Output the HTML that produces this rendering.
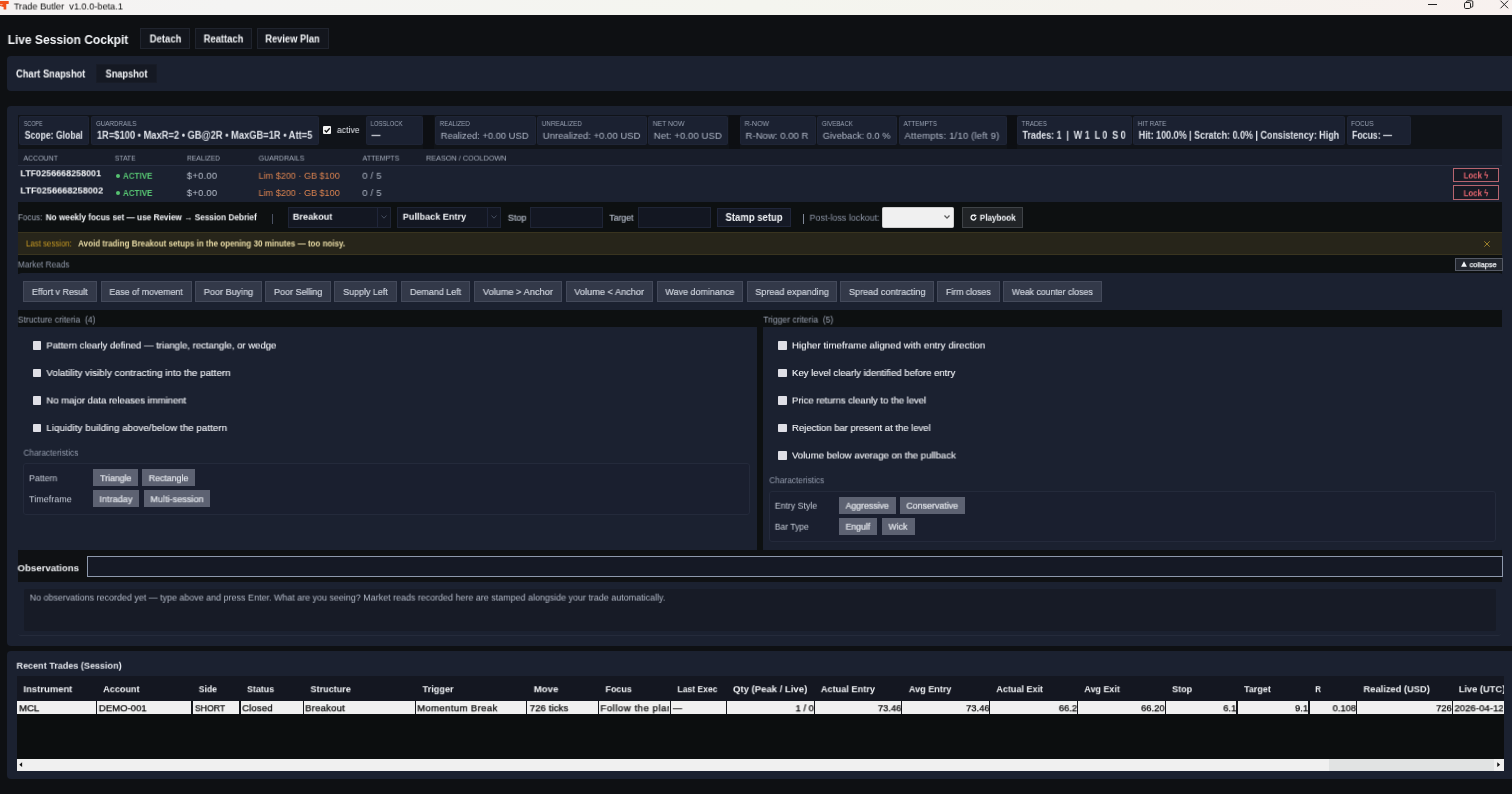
<!DOCTYPE html>
<html lang="en"><head><meta charset="utf-8"><title>Trade Butler v1.0.0-beta.1</title>
<style>
html,body{margin:0;padding:0;overflow:hidden;}
body{width:1512px;height:794px;overflow:hidden;background:#0e1013;position:relative;font-family:"Liberation Sans",sans-serif;}
.b{position:absolute;box-sizing:border-box;}
.t{position:absolute;white-space:pre;transform-origin:0 50%;will-change:transform;}
svg{position:absolute;overflow:visible;}
</style></head>
<body>
<div class="b" style="left:0px;top:0px;width:1512px;height:14.75px;background:linear-gradient(90deg,#f5f2f2 0%,#f4f4f3 15%,#f4f5ef 50%,#f5f3ee 75%,#f8f1ef 100%);"></div>
<svg style="left:0;top:1.4px" width="9" height="8.5" viewBox="0 0 9 8.5"><path d="M0 0h8.7v3.1H6.3v5.3H3.6V6.1L0 4.9z" fill="#f0501a"/><path d="M3.4 3.3 1.2 4.6 0 3.6V3.1z" fill="#f9b9a0"/></svg>
<span class="t" style="left:13px;top:0px;font-size:9.8px;line-height:11px;color:#0a0a0a;transform:translate(0.8px,0.45px) scaleX(0.9393);">Trade Butler  v1.0.0-beta.1</span>
<svg style="left:1428px;top:0.4px" width="82" height="10" viewBox="0 0 82 10" fill="none" stroke="#222" stroke-width="1"><path d="M0 4.5h9"/><rect x="36.5" y="2.5" width="6" height="6" rx="1.2"/><path d="M38.5 2.5V1.8a1 1 0 0 1 1-1h4.3a1 1 0 0 1 1 1v4.3a1 1 0 0 1-1 1H42.6"/><path d="M72.5 0.7l7.6 7.6M80.1 0.7l-7.6 7.6"/></svg>
<span class="t" style="left:7px;top:33px;font-size:12.2px;line-height:14px;color:#f2f4f7;font-weight:700;transform:translate(0.7px,0.0px) scaleX(0.9826);">Live Session Cockpit</span>
<div class="b" style="left:140.2px;top:28.2px;width:50.3px;height:20.6px;background:#13161d;border:1px solid #20242e;"></div>
<span class="t" style="left:149px;top:33px;font-size:10.0px;line-height:11px;color:#f2f4f7;font-weight:700;transform:translate(0.7px,0.45px) scaleX(0.9508);">Detach</span>
<div class="b" style="left:195px;top:28.2px;width:56.5px;height:20.6px;background:#13161d;border:1px solid #20242e;"></div>
<span class="t" style="left:203px;top:33px;font-size:10.0px;line-height:11px;color:#f2f4f7;font-weight:700;transform:translate(0.7px,0.45px) scaleX(0.9376);">Reattach</span>
<div class="b" style="left:257px;top:28.2px;width:71.5px;height:20.6px;background:#13161d;border:1px solid #20242e;"></div>
<span class="t" style="left:265px;top:33px;font-size:10.0px;line-height:11px;color:#f2f4f7;font-weight:700;transform:translate(0.3px,0.45px) scaleX(0.9305);">Review Plan</span>
<div class="b" style="left:7px;top:55.6px;width:1505px;height:35.5px;background:#1b2130;border-radius:4px 0 0 4px;"></div>
<span class="t" style="left:16px;top:68px;font-size:10.0px;line-height:11px;color:#f2f4f7;font-weight:700;transform:translate(0.0px,0.45px) scaleX(0.9319);">Chart Snapshot</span>
<div class="b" style="left:96px;top:64px;width:61px;height:18.8px;background:#151923;border:1px solid #181c27;"></div>
<span class="t" style="left:105px;top:68px;font-size:10.0px;line-height:11px;color:#f2f4f7;font-weight:700;transform:translate(0.6px,0.45px) scaleX(0.9194);">Snapshot</span>
<div class="b" style="left:7px;top:105.5px;width:1505px;height:540.7px;background:#1b2130;border-radius:4px 0 0 4px;"></div>
<div class="b" style="left:18px;top:115.4px;width:1484px;height:34px;background:#101318;"></div>
<div class="b" style="left:423.4px;top:115.4px;width:11px;height:34px;background:#0d0f13;"></div>
<div class="b" style="left:728.6px;top:115.4px;width:11.4px;height:34px;background:#0d0f13;"></div>
<div class="b" style="left:1006.6px;top:115.4px;width:10.3px;height:34px;background:#0d0f13;"></div>
<div class="b" style="left:319.5px;top:115.4px;width:46.5px;height:34px;background:#101319;"></div>
<div class="b" style="left:19.2px;top:116.3px;width:70.1px;height:28.8px;background:#1b2131;border:1px solid #1f2536;border-radius:1.5px;"></div>
<span class="t" style="left:23px;top:119px;font-size:7.4px;line-height:9px;color:#99a2b3;transform:translate(0.8px,0.0px) scaleX(0.7246);">SCOPE</span>
<span class="t" style="left:24px;top:129px;font-size:10.1px;line-height:11px;color:#dfe3ea;font-weight:700;transform:translate(0.7px,0.8px) scaleX(0.8566);">Scope: Global</span>
<div class="b" style="left:91.4px;top:116.3px;width:227.99999999999997px;height:28.8px;background:#1b2131;border:1px solid #1f2536;border-radius:1.5px;"></div>
<span class="t" style="left:96px;top:119px;font-size:7.4px;line-height:9px;color:#99a2b3;transform:scaleX(0.8437);">GUARDRAILS</span>
<span class="t" style="left:96px;top:129px;font-size:10.1px;line-height:11px;color:#dfe3ea;font-weight:700;transform:translate(0.9px,0.8px) scaleX(0.925);">1R=$100 • MaxR=2 • GB@2R • MaxGB=1R • Att=5</span>
<div class="b" style="left:323px;top:126px;width:8.3px;height:8.3px;background:#f4f4f4;border-radius:1px;"></div>
<svg style="left:323px;top:126px" width="8.3" height="8.3" viewBox="0 0 8 8"><path d="M1.6 4.1l1.7 1.7 3.2-3.6" fill="none" stroke="#111" stroke-width="1.3"/></svg>
<span class="t" style="left:336px;top:123px;font-size:9.4px;line-height:11px;color:#e3e6ec;transform:translate(0.9px,0.95px) scaleX(0.9268);">active</span>
<div class="b" style="left:366px;top:116.3px;width:57.30000000000001px;height:28.8px;background:#1b2131;border:1px solid #1f2536;border-radius:1.5px;"></div>
<span class="t" style="left:370px;top:119px;font-size:7.4px;line-height:9px;color:#99a2b3;transform:translate(0.6px,0.0px) scaleX(0.8017);">LOSSLOCK</span>
<span class="t" style="left:371px;top:129px;font-size:10.1px;line-height:11px;color:#dfe3ea;font-weight:700;transform:translate(0.5px,0.8px) scaleX(0.885);">—</span>
<div class="b" style="left:435.2px;top:116.3px;width:100.80000000000001px;height:28.8px;background:#1b2131;border:1px solid #1f2536;border-radius:1.5px;"></div>
<span class="t" style="left:439px;top:119px;font-size:7.4px;line-height:9px;color:#99a2b3;transform:translate(0.8px,0.0px) scaleX(0.8323);">REALIZED</span>
<span class="t" style="left:440px;top:129px;font-size:9.6px;line-height:11px;color:#b1b9c8;transform:translate(0.7px,0.8px) scaleX(0.9774);">Realized: +0.00 USD</span>
<div class="b" style="left:537.2px;top:116.3px;width:109.79999999999995px;height:28.8px;background:#1b2131;border:1px solid #1f2536;border-radius:1.5px;"></div>
<span class="t" style="left:541px;top:119px;font-size:7.4px;line-height:9px;color:#99a2b3;transform:translate(0.8px,0.0px) scaleX(0.8563);">UNREALIZED</span>
<span class="t" style="left:542px;top:129px;font-size:9.6px;line-height:11px;color:#b1b9c8;transform:translate(0.7px,0.8px) scaleX(0.9933);">Unrealized: +0.00 USD</span>
<div class="b" style="left:648.2px;top:116.3px;width:79.79999999999995px;height:28.8px;background:#1b2131;border:1px solid #1f2536;border-radius:1.5px;"></div>
<span class="t" style="left:652px;top:119px;font-size:7.4px;line-height:9px;color:#99a2b3;transform:translate(0.8px,0.0px) scaleX(0.9106);">NET NOW</span>
<span class="t" style="left:653px;top:129px;font-size:9.6px;line-height:11px;color:#b1b9c8;transform:translate(0.7px,0.8px) scaleX(0.999);letter-spacing:0.059px;">Net: +0.00 USD</span>
<div class="b" style="left:740px;top:116.3px;width:76px;height:28.8px;background:#1b2131;border:1px solid #1f2536;border-radius:1.5px;"></div>
<span class="t" style="left:744px;top:119px;font-size:7.4px;line-height:9px;color:#99a2b3;transform:translate(0.6px,0.0px) scaleX(0.9427);">R-NOW</span>
<span class="t" style="left:745px;top:129px;font-size:9.6px;line-height:11px;color:#b1b9c8;transform:translate(0.5px,0.8px) scaleX(0.999);letter-spacing:0.01px;">R-Now: 0.00 R</span>
<div class="b" style="left:817.2px;top:116.3px;width:80.29999999999995px;height:28.8px;background:#1b2131;border:1px solid #1f2536;border-radius:1.5px;"></div>
<span class="t" style="left:821px;top:119px;font-size:7.4px;line-height:9px;color:#99a2b3;transform:translate(0.8px,0.0px) scaleX(0.8241);">GIVEBACK</span>
<span class="t" style="left:822px;top:129px;font-size:9.6px;line-height:11px;color:#b1b9c8;transform:translate(0.7px,0.8px) scaleX(0.9712);">Giveback: 0.0 %</span>
<div class="b" style="left:899px;top:116.3px;width:107.5px;height:28.8px;background:#1b2131;border:1px solid #1f2536;border-radius:1.5px;"></div>
<span class="t" style="left:903px;top:119px;font-size:7.4px;line-height:9px;color:#99a2b3;transform:translate(0.6px,0.0px) scaleX(0.8577);">ATTEMPTS</span>
<span class="t" style="left:904px;top:129px;font-size:9.6px;line-height:11px;color:#b1b9c8;transform:translate(0.5px,0.8px) scaleX(0.999);letter-spacing:0.145px;">Attempts: 1/10 (left 9)</span>
<div class="b" style="left:1017px;top:116.3px;width:115px;height:28.8px;background:#1b2131;border:1px solid #1f2536;border-radius:1.5px;"></div>
<span class="t" style="left:1021px;top:119px;font-size:7.4px;line-height:9px;color:#99a2b3;transform:translate(0.6px,0.0px) scaleX(0.8453);">TRADES</span>
<span class="t" style="left:1022px;top:129px;font-size:10.1px;line-height:11px;color:#dfe3ea;font-weight:700;transform:translate(0.5px,0.8px) scaleX(0.8798);">Trades: 1  |  W 1  L 0  S 0</span>
<div class="b" style="left:1133.2px;top:116.3px;width:212.0999999999999px;height:28.8px;background:#1b2131;border:1px solid #1f2536;border-radius:1.5px;"></div>
<span class="t" style="left:1137px;top:119px;font-size:7.4px;line-height:9px;color:#99a2b3;transform:translate(0.8px,0.0px) scaleX(0.8677);">HIT RATE</span>
<span class="t" style="left:1138px;top:129px;font-size:10.1px;line-height:11px;color:#dfe3ea;font-weight:700;transform:translate(0.7px,0.8px) scaleX(0.8888);">Hit: 100.0% | Scratch: 0.0% | Consistency: High</span>
<div class="b" style="left:1346.5px;top:116.3px;width:64.79999999999995px;height:28.8px;background:#1b2131;border:1px solid #1f2536;border-radius:1.5px;"></div>
<span class="t" style="left:1351px;top:119px;font-size:7.4px;line-height:9px;color:#99a2b3;transform:translate(0.1px,0.0px) scaleX(0.8675);">FOCUS</span>
<span class="t" style="left:1352px;top:129px;font-size:10.1px;line-height:11px;color:#dfe3ea;font-weight:700;transform:translate(0.0px,0.8px) scaleX(0.8659);">Focus: —</span>
<div class="b" style="left:18px;top:149.4px;width:1484px;height:16px;background:#181d2a;"></div>
<div class="b" style="left:18px;top:165.2px;width:1484px;height:0.9px;background:#272d3f;"></div>
<span class="t" style="left:23px;top:153px;font-size:8.0px;line-height:9px;color:#a7afbe;transform:translate(0.5px,0.6px) scaleX(0.8672);">ACCOUNT</span>
<span class="t" style="left:114px;top:153px;font-size:8.0px;line-height:9px;color:#a7afbe;transform:translate(0.8px,0.6px) scaleX(0.8492);">STATE</span>
<span class="t" style="left:187px;top:153px;font-size:8.0px;line-height:9px;color:#a7afbe;transform:translate(0.0px,0.6px) scaleX(0.8438);">REALIZED</span>
<span class="t" style="left:258px;top:153px;font-size:8.0px;line-height:9px;color:#a7afbe;transform:translate(0.6px,0.6px) scaleX(0.8786);">GUARDRAILS</span>
<span class="t" style="left:362px;top:153px;font-size:8.0px;line-height:9px;color:#a7afbe;transform:translate(0.6px,0.6px) scaleX(0.8721);">ATTEMPTS</span>
<span class="t" style="left:426px;top:153px;font-size:8.0px;line-height:9px;color:#a7afbe;transform:translate(0.0px,0.6px) scaleX(0.9089);">REASON / COOLDOWN</span>
<span class="t" style="left:20px;top:167px;font-size:9.6px;line-height:11px;color:#f2f4f7;font-weight:700;transform:translate(0.4px,0.3px) scaleX(0.9345);">LTF0256668258001</span>
<div class="b" style="left:115.5px;top:173.9px;width:4.2px;height:4.2px;background:#56c271;border-radius:3px;"></div>
<span class="t" style="left:122px;top:169px;font-size:9.6px;line-height:11px;color:#56c271;font-weight:700;transform:translate(0.9px,0.8px) scaleX(0.8384);">ACTIVE</span>
<span class="t" style="left:186px;top:169px;font-size:9.4px;line-height:11px;color:#bcc3d0;transform:translate(0.8px,0.8px) scaleX(0.999);letter-spacing:0.256px;">$+0.00</span>
<span class="t" style="left:258px;top:169px;font-size:9.4px;line-height:11px;color:#dd8450;transform:translate(0.5px,0.8px) scaleX(0.9679);">Lim $200 · GB $100</span>
<span class="t" style="left:362px;top:169px;font-size:9.4px;line-height:11px;color:#b0b8c6;transform:translate(0.3px,0.8px) scaleX(0.999);letter-spacing:0.218px;">0 / 5</span>
<div class="b" style="left:1453px;top:167.5px;width:46.3px;height:14.3px;background:#171a24;border:1px solid #b8656f;"></div>
<span class="t" style="left:1463px;top:170px;font-size:8.7px;line-height:10px;color:#e5666f;font-weight:700;transform:translate(0.6px,0.5px) scaleX(0.9028);">Lock ϟ</span>
<span class="t" style="left:20px;top:184px;font-size:9.6px;line-height:11px;color:#f2f4f7;font-weight:700;transform:translate(0.4px,0.5px) scaleX(0.9593);">LTF0256668258002</span>
<div class="b" style="left:115.5px;top:191.10000000000002px;width:4.2px;height:4.2px;background:#56c271;border-radius:3px;"></div>
<span class="t" style="left:122px;top:187px;font-size:9.6px;line-height:11px;color:#56c271;font-weight:700;transform:translate(0.9px,0.0px) scaleX(0.8384);">ACTIVE</span>
<span class="t" style="left:186px;top:187px;font-size:9.4px;line-height:11px;color:#bcc3d0;transform:translate(0.8px,0.0px) scaleX(0.999);letter-spacing:0.256px;">$+0.00</span>
<span class="t" style="left:258px;top:187px;font-size:9.4px;line-height:11px;color:#dd8450;transform:translate(0.5px,0.0px) scaleX(0.9679);">Lim $200 · GB $100</span>
<span class="t" style="left:362px;top:187px;font-size:9.4px;line-height:11px;color:#b0b8c6;transform:translate(0.3px,0.0px) scaleX(0.999);letter-spacing:0.218px;">0 / 5</span>
<div class="b" style="left:1453px;top:185.25px;width:46.3px;height:14.3px;background:#171a24;border:1px solid #b8656f;"></div>
<span class="t" style="left:1463px;top:188px;font-size:8.7px;line-height:10px;color:#e5666f;font-weight:700;transform:translate(0.6px,0.25px) scaleX(0.9028);">Lock ϟ</span>
<div class="b" style="left:18px;top:201.9px;width:1484px;height:30px;background:#0d1011;"></div>
<span class="t" style="left:17px;top:212px;font-size:8.8px;line-height:10px;color:#a3abba;transform:translate(0.9px,0.3px) scaleX(0.9285);">Focus:</span>
<span class="t" style="left:45px;top:212px;font-size:8.8px;line-height:10px;color:#f2f4f7;font-weight:700;transform:translate(0.7px,0.3px) scaleX(0.9343);">No weekly focus set — use Review → Session Debrief</span>
<div class="b" style="left:272px;top:213.5px;width:1.3px;height:10.3px;background:#4a5162;"></div>
<div class="b" style="left:288.1px;top:206.5px;width:103.19999999999999px;height:21.3px;background:#131722;border:1px solid #1f2536;"></div>
<span class="t" style="left:292px;top:210px;font-size:9.7px;line-height:11px;color:#f2f4f7;font-weight:700;transform:translate(0.8px,0.7px) scaleX(0.9424);">Breakout</span>
<div class="b" style="left:377.1px;top:207.5px;width:1px;height:19.3px;background:#20263a;"></div>
<svg style="left:381.1px;top:214.8px" width="6" height="4" viewBox="0 0 6 4"><path d="M0.5 0.5l2.5 2.7L5.5 0.5" fill="none" stroke="#4a5264" stroke-width="0.9"/></svg>
<div class="b" style="left:397.3px;top:206.5px;width:104.0px;height:21.3px;background:#131722;border:1px solid #1f2536;"></div>
<span class="t" style="left:402px;top:210px;font-size:9.7px;line-height:11px;color:#f2f4f7;font-weight:700;transform:translate(0.8px,0.7px) scaleX(0.9395);">Pullback Entry</span>
<div class="b" style="left:487.1px;top:207.5px;width:1px;height:19.3px;background:#20263a;"></div>
<svg style="left:491.1px;top:214.8px" width="6" height="4" viewBox="0 0 6 4"><path d="M0.5 0.5l2.5 2.7L5.5 0.5" fill="none" stroke="#4a5264" stroke-width="0.9"/></svg>
<span class="t" style="left:507px;top:211px;font-size:9.4px;line-height:11px;color:#b3bac7;transform:translate(0.8px,0.7px) scaleX(0.97);-webkit-text-stroke:0.2px #b3bac7;">Stop</span>
<div class="b" style="left:530.3px;top:206.5px;width:72.5px;height:21.3px;background:#131722;border:1px solid #1f2536;"></div>
<span class="t" style="left:609px;top:211px;font-size:9.4px;line-height:11px;color:#b3bac7;transform:translate(0.3px,0.7px) scaleX(0.9263);-webkit-text-stroke:0.2px #b3bac7;">Target</span>
<div class="b" style="left:638px;top:206.5px;width:72.5px;height:21.3px;background:#131722;border:1px solid #1f2536;"></div>
<div class="b" style="left:716.8px;top:208px;width:74px;height:19px;background:#151925;border:1px solid #20263a;"></div>
<span class="t" style="left:725px;top:211px;font-size:10.1px;line-height:11px;color:#f2f4f7;font-weight:700;transform:translate(0.5px,0.9px) scaleX(0.9419);">Stamp setup</span>
<div class="b" style="left:803px;top:213.5px;width:1.2px;height:10.3px;background:#808898;"></div>
<span class="t" style="left:809px;top:211px;font-size:9.4px;line-height:11px;color:#8f97a8;transform:translate(0.5px,0.7px) scaleX(0.9539);">Post-loss lockout:</span>
<div class="b" style="left:882px;top:206.5px;width:72.3px;height:21px;background:#f0f0f0;border:1px solid #d0d0d0;border-radius:1.5px;"></div>
<svg style="left:944px;top:214.6px" width="6" height="4" viewBox="0 0 6 4"><path d="M0.5 0.5l2.5 2.6L5.5 0.5" fill="none" stroke="#5c5c5c" stroke-width="1.3"/></svg>
<div class="b" style="left:961.8px;top:206.5px;width:61.2px;height:21.3px;background:#212427;border:1px solid #3f4347;"></div>
<svg style="left:969.8px;top:214.2px" width="7" height="7" viewBox="0 0 7 7"><path d="M5.9 3.6A2.4 2.4 0 1 1 4.9 1.6" fill="none" stroke="#f2f4f7" stroke-width="1.35"/><path d="M4.3 0.1l2.5 1.7-2.7 1.3z" fill="#f2f4f7"/></svg>
<span class="t" style="left:979px;top:212px;font-size:9.2px;line-height:10px;color:#f2f4f7;font-weight:700;transform:translate(0.8px,0.7px) scaleX(0.8793);">Playbook</span>
<div class="b" style="left:18px;top:231.8px;width:1484px;height:23px;background:#27251a;border-top:1px solid #39341f;border-bottom:1px solid #39341f;"></div>
<span class="t" style="left:26px;top:239px;font-size:8.2px;line-height:9px;color:#c79a24;transform:translate(0.0px,0.5px) scaleX(0.9598);">Last session:</span>
<span class="t" style="left:78px;top:239px;font-size:8.2px;line-height:9px;color:#e9dca6;font-weight:700;transform:translate(0.1px,0.5px) scaleX(0.9781);">Avoid trading Breakout setups in the opening 30 minutes — too noisy.</span>
<svg style="left:1484.2px;top:241px" width="6" height="6" viewBox="0 0 6 6"><path d="M0.3 0.3l5.4 5.4M5.7 0.3l-5.4 5.4" stroke="#a88a2c" stroke-width="0.9" fill="none"/></svg>
<div class="b" style="left:18px;top:254.5px;width:1484px;height:19.5px;background:#0d1011;"></div>
<span class="t" style="left:17px;top:259px;font-size:8.3px;line-height:10px;color:#949cad;transform:translate(0.8px,0.45px) scaleX(0.999);letter-spacing:0.009px;">Market Reads</span>
<div class="b" style="left:1455px;top:257.5px;width:48px;height:13.5px;background:#22262e;border:1px solid #555a66;"></div>
<svg style="left:1461px;top:261px" width="6" height="6" viewBox="0 0 6 6"><path d="M3 0.3L5.9 5.8H0.1z" fill="#f2f4f7"/></svg>
<span class="t" style="left:1469px;top:260px;font-size:8.1px;line-height:9px;color:#f2f4f7;transform:translate(0.5px,0.1px) scaleX(0.9108);-webkit-text-stroke:0.25px #f2f4f7;">collapse</span>
<div class="b" style="left:18px;top:273.2px;width:1484.5px;height:37.1px;background:#1b2130;border-radius:4px;"></div>
<div class="b" style="left:23.1px;top:281px;width:73.80000000000001px;height:21.3px;background:#333949;border:1px solid #444a5b;"></div>
<span class="t" style="left:31px;top:285px;font-size:9.4px;line-height:11px;color:#cdd2dc;transform:translate(0.9px,0.95px) scaleX(0.951);-webkit-text-stroke:0.2px #cdd2dc;">Effort v Result</span>
<div class="b" style="left:100.9px;top:281px;width:91.0px;height:21.3px;background:#333949;border:1px solid #444a5b;"></div>
<span class="t" style="left:109px;top:285px;font-size:9.4px;line-height:11px;color:#cdd2dc;transform:translate(0.4px,0.95px) scaleX(0.9382);-webkit-text-stroke:0.2px #cdd2dc;">Ease of movement</span>
<div class="b" style="left:195px;top:281px;width:66.80000000000001px;height:21.3px;background:#333949;border:1px solid #444a5b;"></div>
<span class="t" style="left:203px;top:285px;font-size:9.4px;line-height:11px;color:#cdd2dc;transform:translate(0.8px,0.95px) scaleX(0.9674);-webkit-text-stroke:0.2px #cdd2dc;">Poor Buying</span>
<div class="b" style="left:265.2px;top:281px;width:65.80000000000001px;height:21.3px;background:#333949;border:1px solid #444a5b;"></div>
<span class="t" style="left:274px;top:285px;font-size:9.4px;line-height:11px;color:#cdd2dc;transform:translate(0.0px,0.95px) scaleX(0.9575);-webkit-text-stroke:0.2px #cdd2dc;">Poor Selling</span>
<div class="b" style="left:334.4px;top:281px;width:62.5px;height:21.3px;background:#333949;border:1px solid #444a5b;"></div>
<span class="t" style="left:343px;top:285px;font-size:9.4px;line-height:11px;color:#cdd2dc;transform:translate(0.2px,0.95px) scaleX(0.9492);-webkit-text-stroke:0.2px #cdd2dc;">Supply Left</span>
<div class="b" style="left:401.2px;top:281px;width:69.10000000000002px;height:21.3px;background:#333949;border:1px solid #444a5b;"></div>
<span class="t" style="left:410px;top:285px;font-size:9.4px;line-height:11px;color:#cdd2dc;transform:translate(0.0px,0.95px) scaleX(0.9524);-webkit-text-stroke:0.2px #cdd2dc;">Demand Left</span>
<div class="b" style="left:474px;top:281px;width:88.10000000000002px;height:21.3px;background:#333949;border:1px solid #444a5b;"></div>
<span class="t" style="left:482px;top:285px;font-size:9.4px;line-height:11px;color:#cdd2dc;transform:translate(0.8px,0.95px) scaleX(0.9855);-webkit-text-stroke:0.2px #cdd2dc;">Volume &gt; Anchor</span>
<div class="b" style="left:565.5px;top:281px;width:87.79999999999995px;height:21.3px;background:#333949;border:1px solid #444a5b;"></div>
<span class="t" style="left:574px;top:285px;font-size:9.4px;line-height:11px;color:#cdd2dc;transform:translate(0.3px,0.95px) scaleX(0.9813);-webkit-text-stroke:0.2px #cdd2dc;">Volume &lt; Anchor</span>
<div class="b" style="left:656.5px;top:281px;width:86.5px;height:21.3px;background:#333949;border:1px solid #444a5b;"></div>
<span class="t" style="left:665px;top:285px;font-size:9.4px;line-height:11px;color:#cdd2dc;transform:translate(0.3px,0.95px) scaleX(0.9587);-webkit-text-stroke:0.2px #cdd2dc;">Wave dominance</span>
<div class="b" style="left:746.5px;top:281px;width:90.79999999999995px;height:21.3px;background:#333949;border:1px solid #444a5b;"></div>
<span class="t" style="left:755px;top:285px;font-size:9.4px;line-height:11px;color:#cdd2dc;transform:translate(0.3px,0.95px) scaleX(0.9646);-webkit-text-stroke:0.2px #cdd2dc;">Spread expanding</span>
<div class="b" style="left:840.1px;top:281px;width:94.0px;height:21.3px;background:#333949;border:1px solid #444a5b;"></div>
<span class="t" style="left:848px;top:285px;font-size:9.4px;line-height:11px;color:#cdd2dc;transform:translate(0.9px,0.95px) scaleX(0.9735);-webkit-text-stroke:0.2px #cdd2dc;">Spread contracting</span>
<div class="b" style="left:937.2px;top:281px;width:62.59999999999991px;height:21.3px;background:#333949;border:1px solid #444a5b;"></div>
<span class="t" style="left:946px;top:285px;font-size:9.4px;line-height:11px;color:#cdd2dc;transform:translate(0.0px,0.95px) scaleX(0.933);-webkit-text-stroke:0.2px #cdd2dc;">Firm closes</span>
<div class="b" style="left:1003px;top:281px;width:98.79999999999995px;height:21.3px;background:#333949;border:1px solid #444a5b;"></div>
<span class="t" style="left:1011px;top:285px;font-size:9.4px;line-height:11px;color:#cdd2dc;transform:translate(0.8px,0.95px) scaleX(0.9316);-webkit-text-stroke:0.2px #cdd2dc;">Weak counter closes</span>
<div class="b" style="left:18px;top:310.3px;width:1484px;height:17px;background:#0d1011;"></div>
<span class="t" style="left:17px;top:314px;font-size:8.4px;line-height:10px;color:#9ea6b6;transform:translate(0.8px,0.6px) scaleX(0.999);letter-spacing:0.058px;">Structure criteria  (4)</span>
<span class="t" style="left:763px;top:314px;font-size:8.4px;line-height:10px;color:#9ea6b6;transform:translate(0.3px,0.6px) scaleX(0.999);letter-spacing:0.076px;">Trigger criteria  (5)</span>
<div class="b" style="left:18px;top:327px;width:739px;height:222.5px;background:#1b2130;border-radius:3px;"></div>
<div class="b" style="left:757px;top:327px;width:6.1px;height:222.5px;background:#0d1011;"></div>
<div class="b" style="left:763.1px;top:327px;width:738.9px;height:222.5px;background:#1b2130;border-radius:3px;"></div>
<div class="b" style="left:32.5px;top:341.45px;width:8.6px;height:8.5px;background:#dfdfe6;border-radius:0.8px;"></div>
<span class="t" style="left:46px;top:339px;font-size:9.6px;line-height:11px;color:#f1f3f7;transform:translate(0.4px,0.45px) scaleX(0.9935);-webkit-text-stroke:0.12px #f1f3f7;">Pattern clearly defined — triangle, rectangle, or wedge</span>
<div class="b" style="left:32.5px;top:368.95px;width:8.6px;height:8.5px;background:#dfdfe6;border-radius:0.8px;"></div>
<span class="t" style="left:46px;top:366px;font-size:9.6px;line-height:11px;color:#f1f3f7;transform:translate(0.4px,0.95px) scaleX(0.999);-webkit-text-stroke:0.12px #f1f3f7;letter-spacing:0.091px;">Volatility visibly contracting into the pattern</span>
<div class="b" style="left:32.5px;top:396.45px;width:8.6px;height:8.5px;background:#dfdfe6;border-radius:0.8px;"></div>
<span class="t" style="left:46px;top:394px;font-size:9.6px;line-height:11px;color:#f1f3f7;transform:translate(0.4px,0.45px) scaleX(0.9929);-webkit-text-stroke:0.12px #f1f3f7;">No major data releases imminent</span>
<div class="b" style="left:32.5px;top:423.95px;width:8.6px;height:8.5px;background:#dfdfe6;border-radius:0.8px;"></div>
<span class="t" style="left:46px;top:421px;font-size:9.6px;line-height:11px;color:#f1f3f7;transform:translate(0.4px,0.95px) scaleX(0.999);-webkit-text-stroke:0.12px #f1f3f7;letter-spacing:0.12px;">Liquidity building above/below the pattern</span>
<div class="b" style="left:778.1px;top:341.45px;width:8.6px;height:8.5px;background:#dfdfe6;border-radius:0.8px;"></div>
<span class="t" style="left:792px;top:339px;font-size:9.6px;line-height:11px;color:#f1f3f7;transform:translate(0.0px,0.45px) scaleX(0.999);-webkit-text-stroke:0.12px #f1f3f7;letter-spacing:0.08px;">Higher timeframe aligned with entry direction</span>
<div class="b" style="left:778.1px;top:368.95px;width:8.6px;height:8.5px;background:#dfdfe6;border-radius:0.8px;"></div>
<span class="t" style="left:792px;top:366px;font-size:9.6px;line-height:11px;color:#f1f3f7;transform:translate(0.0px,0.95px) scaleX(0.9942);-webkit-text-stroke:0.12px #f1f3f7;">Key level clearly identified before entry</span>
<div class="b" style="left:778.1px;top:396.45px;width:8.6px;height:8.5px;background:#dfdfe6;border-radius:0.8px;"></div>
<span class="t" style="left:792px;top:394px;font-size:9.6px;line-height:11px;color:#f1f3f7;transform:translate(0.0px,0.45px) scaleX(0.9864);-webkit-text-stroke:0.12px #f1f3f7;">Price returns cleanly to the level</span>
<div class="b" style="left:778.1px;top:423.95px;width:8.6px;height:8.5px;background:#dfdfe6;border-radius:0.8px;"></div>
<span class="t" style="left:792px;top:421px;font-size:9.6px;line-height:11px;color:#f1f3f7;transform:translate(0.0px,0.95px) scaleX(0.9884);-webkit-text-stroke:0.12px #f1f3f7;">Rejection bar present at the level</span>
<div class="b" style="left:778.1px;top:451.45px;width:8.6px;height:8.5px;background:#dfdfe6;border-radius:0.8px;"></div>
<span class="t" style="left:792px;top:449px;font-size:9.6px;line-height:11px;color:#f1f3f7;transform:translate(0.0px,0.45px) scaleX(0.9971);-webkit-text-stroke:0.12px #f1f3f7;">Volume below average on the pullback</span>
<span class="t" style="left:23px;top:447px;font-size:8.4px;line-height:10px;color:#949cad;transform:translate(0.5px,0.7px) scaleX(0.9892);">Characteristics</span>
<div class="b" style="left:22.9px;top:463px;width:727.5px;height:51.5px;background:#1a1f2f;border:1px solid #242a3b;border-radius:3px;"></div>
<span class="t" style="left:29px;top:473px;font-size:9.0px;line-height:10px;color:#c6ccd7;transform:translate(0.0px,0.2px) scaleX(0.9755);">Pattern</span>
<div class="b" style="left:93.1px;top:469.3px;width:45.0px;height:16.9px;background:#5d6272;"></div>
<span class="t" style="left:100px;top:473px;font-size:9.0px;line-height:10px;color:#e6e9ee;transform:translate(0.0px,0.2px) scaleX(0.9728);-webkit-text-stroke:0.2px #e6e9ee;">Triangle</span>
<div class="b" style="left:142.2px;top:469.3px;width:52.60000000000002px;height:16.9px;background:#5d6272;"></div>
<span class="t" style="left:148px;top:473px;font-size:9.0px;line-height:10px;color:#e6e9ee;transform:translate(0.8px,0.2px) scaleX(0.9748);-webkit-text-stroke:0.2px #e6e9ee;">Rectangle</span>
<span class="t" style="left:29px;top:494px;font-size:9.0px;line-height:10px;color:#c6ccd7;transform:translate(0.0px,0.2px) scaleX(0.999);letter-spacing:0.017px;">Timeframe</span>
<div class="b" style="left:93.1px;top:490.3px;width:46.400000000000006px;height:16.9px;background:#5d6272;"></div>
<span class="t" style="left:99px;top:494px;font-size:9.0px;line-height:10px;color:#e6e9ee;transform:translate(0.5px,0.2px) scaleX(0.999);-webkit-text-stroke:0.2px #e6e9ee;letter-spacing:0.054px;">Intraday</span>
<div class="b" style="left:143.5px;top:490.3px;width:66.80000000000001px;height:16.9px;background:#5d6272;"></div>
<span class="t" style="left:150px;top:494px;font-size:9.0px;line-height:10px;color:#e6e9ee;transform:translate(0.4px,0.2px) scaleX(0.999);-webkit-text-stroke:0.2px #e6e9ee;letter-spacing:0.058px;">Multi-session</span>
<span class="t" style="left:769px;top:475px;font-size:8.4px;line-height:10px;color:#949cad;transform:translate(0.3px,0.2px) scaleX(0.9892);">Characteristics</span>
<div class="b" style="left:768.6999999999999px;top:490.5px;width:727.5px;height:51.5px;background:#1a1f2f;border:1px solid #242a3b;border-radius:3px;"></div>
<span class="t" style="left:774px;top:500px;font-size:9.0px;line-height:10px;color:#c6ccd7;transform:translate(0.8px,0.7px) scaleX(0.9722);">Entry Style</span>
<div class="b" style="left:839.1px;top:496.8px;width:56.799999999999955px;height:16.9px;background:#5d6272;"></div>
<span class="t" style="left:845px;top:500px;font-size:9.0px;line-height:10px;color:#e6e9ee;transform:translate(0.6px,0.7px) scaleX(0.9704);-webkit-text-stroke:0.2px #e6e9ee;">Aggressive</span>
<div class="b" style="left:899.8px;top:496.8px;width:64.80000000000007px;height:16.9px;background:#5d6272;"></div>
<span class="t" style="left:906px;top:500px;font-size:9.0px;line-height:10px;color:#e6e9ee;transform:translate(0.3px,0.7px) scaleX(0.9844);-webkit-text-stroke:0.2px #e6e9ee;">Conservative</span>
<span class="t" style="left:774px;top:521px;font-size:9.0px;line-height:10px;color:#c6ccd7;transform:translate(0.8px,0.7px) scaleX(0.9497);">Bar Type</span>
<div class="b" style="left:839.1px;top:517.8px;width:38.39999999999998px;height:16.9px;background:#5d6272;"></div>
<span class="t" style="left:845px;top:521px;font-size:9.0px;line-height:10px;color:#e6e9ee;transform:translate(0.6px,0.7px) scaleX(0.9609);-webkit-text-stroke:0.2px #e6e9ee;">Engulf</span>
<div class="b" style="left:881.9px;top:517.8px;width:32.89999999999998px;height:16.9px;background:#5d6272;"></div>
<span class="t" style="left:888px;top:521px;font-size:9.0px;line-height:10px;color:#e6e9ee;transform:translate(0.5px,0.7px) scaleX(0.9653);-webkit-text-stroke:0.2px #e6e9ee;">Wick</span>
<div class="b" style="left:18px;top:549.5px;width:1484px;height:32.5px;background:#0f1114;"></div>
<span class="t" style="left:17px;top:562px;font-size:9.9px;line-height:11px;color:#f2f4f7;font-weight:700;transform:translate(0.5px,0.2px) scaleX(0.9761);">Observations</span>
<div class="b" style="left:87.2px;top:556px;width:1415.8px;height:21.2px;background:#151925;border:1px solid #8e99ad;"></div>
<div class="b" style="left:18px;top:582px;width:1483px;height:53.7px;background:#1b2130;border-radius:3px;border-bottom:1px solid #252b3b;"></div>
<div class="b" style="left:23.7px;top:588.8px;width:1472.4px;height:42.4px;background:#171b26;border-radius:2px;"></div>
<span class="t" style="left:29px;top:592px;font-size:9.0px;line-height:10px;color:#b3bac8;transform:translate(0.6px,0.6px) scaleX(0.9922);">No observations recorded yet — type above and press Enter. What are you seeing? Market reads recorded here are stamped alongside your trade automatically.</span>
<div class="b" style="left:7px;top:651.2px;width:1505px;height:128.2px;background:#1b2130;border-radius:4px 0 0 4px;"></div>
<span class="t" style="left:16px;top:659px;font-size:9.9px;line-height:11px;color:#e4e7ed;font-weight:700;transform:translate(0.5px,0.7px) scaleX(0.916);">Recent Trades (Session)</span>
<div class="b" style="left:16.6px;top:676.3px;width:1487.0px;height:94.7px;background:#0c0e0f;"></div>
<div class="b" style="left:16.6px;top:676.3px;width:1487.0px;height:24.7px;background:#141721;"></div>
<div class="b" style="left:16.6px;top:701px;width:1487.0px;height:13.4px;background:#f0f0f0;"></div>
<span class="t" style="left:23px;top:683px;font-size:9.7px;line-height:11px;color:#f2f4f7;font-weight:700;transform:translate(0.5px,0.2px) scaleX(0.9758);">Instrument</span>
<div class="b" style="left:95.6px;top:701px;width:1.3px;height:13.4px;background:#15171c;"></div>
<div class="b" style="left:16.6px;top:701px;width:78.7px;height:13.4px;overflow:hidden"><span class="t" style="left:2px;top:1px;font-size:9.5px;line-height:11px;color:#000;transform:translate(0.15px,0.2px) scaleX(0.999);-webkit-text-stroke:0.25px #000;letter-spacing:0.038px;">MCL</span></div>
<span class="t" style="left:103px;top:683px;font-size:9.7px;line-height:11px;color:#f2f4f7;font-weight:700;transform:translate(0.1px,0.2px) scaleX(0.9412);">Account</span>
<div class="b" style="left:191.3px;top:701px;width:1.3px;height:13.4px;background:#15171c;"></div>
<div class="b" style="left:96.89999999999999px;top:701px;width:94.1px;height:13.4px;overflow:hidden"><span class="t" style="left:1px;top:1px;font-size:9.5px;line-height:11px;color:#000;transform:translate(0.85px,0.2px) scaleX(0.999);-webkit-text-stroke:0.25px #000;letter-spacing:0.039px;">DEMO-001</span></div>
<span class="t" style="left:198px;top:683px;font-size:9.7px;line-height:11px;color:#f2f4f7;font-weight:700;transform:translate(0.75px,0.2px) scaleX(0.8899);">Side</span>
<div class="b" style="left:239.3px;top:701px;width:1.3px;height:13.4px;background:#15171c;"></div>
<div class="b" style="left:192.60000000000002px;top:701px;width:46.4px;height:13.4px;overflow:hidden"><span class="t" style="left:1px;top:1px;font-size:9.5px;line-height:11px;color:#000;transform:translate(0.9px,0.2px) scaleX(0.9166);-webkit-text-stroke:0.25px #000;">SHORT</span></div>
<span class="t" style="left:247px;top:683px;font-size:9.7px;line-height:11px;color:#f2f4f7;font-weight:700;transform:translate(0.0px,0.2px) scaleX(0.9155);">Status</span>
<div class="b" style="left:303px;top:701px;width:1.3px;height:13.4px;background:#15171c;"></div>
<div class="b" style="left:240.60000000000002px;top:701px;width:62.1px;height:13.4px;overflow:hidden"><span class="t" style="left:1px;top:1px;font-size:9.5px;line-height:11px;color:#000;transform:translate(0.15px,0.2px) scaleX(0.999);-webkit-text-stroke:0.25px #000;letter-spacing:0.192px;">Closed</span></div>
<span class="t" style="left:310px;top:683px;font-size:9.7px;line-height:11px;color:#f2f4f7;font-weight:700;transform:translate(0.5px,0.2px) scaleX(0.9341);">Structure</span>
<div class="b" style="left:415px;top:701px;width:1.3px;height:13.4px;background:#15171c;"></div>
<div class="b" style="left:304.3px;top:701px;width:110.4px;height:13.4px;overflow:hidden"><span class="t" style="left:1px;top:1px;font-size:9.5px;line-height:11px;color:#000;transform:translate(0.2px,0.2px) scaleX(0.999);-webkit-text-stroke:0.25px #000;letter-spacing:0.231px;">Breakout</span></div>
<span class="t" style="left:422px;top:683px;font-size:9.7px;line-height:11px;color:#f2f4f7;font-weight:700;transform:translate(0.5px,0.2px) scaleX(0.9466);">Trigger</span>
<div class="b" style="left:526.2px;top:701px;width:1.3px;height:13.4px;background:#15171c;"></div>
<div class="b" style="left:416.3px;top:701px;width:109.6px;height:13.4px;overflow:hidden"><span class="t" style="left:1px;top:1px;font-size:9.5px;line-height:11px;color:#000;transform:translate(0.2px,0.2px) scaleX(0.999);-webkit-text-stroke:0.25px #000;letter-spacing:0.406px;">Momentum Break</span></div>
<span class="t" style="left:533px;top:683px;font-size:9.7px;line-height:11px;color:#f2f4f7;font-weight:700;transform:translate(0.8px,0.2px) scaleX(0.9852);">Move</span>
<div class="b" style="left:597.8px;top:701px;width:1.3px;height:13.4px;background:#15171c;"></div>
<div class="b" style="left:527.5px;top:701px;width:70.0px;height:13.4px;overflow:hidden"><span class="t" style="left:1px;top:1px;font-size:9.5px;line-height:11px;color:#000;transform:translate(0.75px,0.2px) scaleX(0.999);-webkit-text-stroke:0.25px #000;letter-spacing:0.126px;">726 ticks</span></div>
<span class="t" style="left:605px;top:683px;font-size:9.7px;line-height:11px;color:#f2f4f7;font-weight:700;transform:translate(0.5px,0.2px) scaleX(0.9168);">Focus</span>
<div class="b" style="left:669.8px;top:701px;width:1.3px;height:13.4px;background:#15171c;"></div>
<div class="b" style="left:599.0999999999999px;top:701px;width:70.4px;height:13.4px;overflow:hidden"><span class="t" style="left:1px;top:1px;font-size:9.5px;line-height:11px;color:#000;transform:translate(0.4px,0.2px) scaleX(0.999);-webkit-text-stroke:0.25px #000;letter-spacing:0.578px;">Follow the plan</span></div>
<span class="t" style="left:677px;top:683px;font-size:9.7px;line-height:11px;color:#f2f4f7;font-weight:700;transform:translate(0.5px,0.2px) scaleX(0.8834);">Last Exec</span>
<div class="b" style="left:725.5px;top:701px;width:1.3px;height:13.4px;background:#15171c;"></div>
<div class="b" style="left:671.0999999999999px;top:701px;width:54.1px;height:13.4px;overflow:hidden"><span class="t" style="left:1px;top:1px;font-size:9.5px;line-height:11px;color:#000;transform:translate(0.9px,0.2px) scaleX(0.95);-webkit-text-stroke:0.25px #000;">—</span></div>
<span class="t" style="left:733px;top:683px;font-size:9.7px;line-height:11px;color:#f2f4f7;font-weight:700;transform:translate(0.0px,0.2px) scaleX(0.9847);">Qty (Peak / Live)</span>
<div class="b" style="left:813.7px;top:701px;width:1.3px;height:13.4px;background:#15171c;"></div>
<span class="t" style="left:795px;top:702px;font-size:9.5px;line-height:11px;color:#000;transform:translate(0.57px,0.2px) scaleX(0.985);-webkit-text-stroke:0.25px #000;">1 / 0</span>
<span class="t" style="left:820px;top:683px;font-size:9.7px;line-height:11px;color:#f2f4f7;font-weight:700;transform:translate(0.8px,0.2px) scaleX(0.9485);">Actual Entry</span>
<div class="b" style="left:901.2px;top:701px;width:1.3px;height:13.4px;background:#15171c;"></div>
<span class="t" style="left:877px;top:702px;font-size:9.5px;line-height:11px;color:#000;transform:translate(0.86px,0.2px) scaleX(0.985);-webkit-text-stroke:0.25px #000;">73.46</span>
<span class="t" style="left:908px;top:683px;font-size:9.7px;line-height:11px;color:#f2f4f7;font-weight:700;transform:translate(0.8px,0.2px) scaleX(0.939);">Avg Entry</span>
<div class="b" style="left:989.2px;top:701px;width:1.3px;height:13.4px;background:#15171c;"></div>
<span class="t" style="left:966px;top:702px;font-size:9.5px;line-height:11px;color:#000;transform:translate(0.11px,0.2px) scaleX(0.985);-webkit-text-stroke:0.25px #000;">73.46</span>
<span class="t" style="left:996px;top:683px;font-size:9.7px;line-height:11px;color:#f2f4f7;font-weight:700;transform:translate(0.3px,0.2px) scaleX(0.9343);">Actual Exit</span>
<div class="b" style="left:1077px;top:701px;width:1.3px;height:13.4px;background:#15171c;"></div>
<span class="t" style="left:1058px;top:702px;font-size:9.5px;line-height:11px;color:#000;transform:translate(0.82px,0.2px) scaleX(0.985);-webkit-text-stroke:0.25px #000;">66.2</span>
<span class="t" style="left:1084px;top:683px;font-size:9.7px;line-height:11px;color:#f2f4f7;font-weight:700;transform:translate(0.3px,0.2px) scaleX(0.9241);">Avg Exit</span>
<div class="b" style="left:1164.5px;top:701px;width:1.3px;height:13.4px;background:#15171c;"></div>
<span class="t" style="left:1141px;top:702px;font-size:9.5px;line-height:11px;color:#000;transform:translate(0.11px,0.2px) scaleX(0.985);-webkit-text-stroke:0.25px #000;">66.20</span>
<span class="t" style="left:1172px;top:683px;font-size:9.7px;line-height:11px;color:#f2f4f7;font-weight:700;transform:translate(0.0px,0.2px) scaleX(0.9396);">Stop</span>
<div class="b" style="left:1236.4px;top:701px;width:1.3px;height:13.4px;background:#15171c;"></div>
<span class="t" style="left:1223px;top:702px;font-size:9.5px;line-height:11px;color:#000;transform:translate(0.27px,0.2px) scaleX(0.985);-webkit-text-stroke:0.25px #000;">6.1</span>
<span class="t" style="left:1244px;top:683px;font-size:9.7px;line-height:11px;color:#f2f4f7;font-weight:700;transform:translate(0.0px,0.2px) scaleX(0.9272);">Target</span>
<div class="b" style="left:1308.4px;top:701px;width:1.3px;height:13.4px;background:#15171c;"></div>
<span class="t" style="left:1295px;top:702px;font-size:9.5px;line-height:11px;color:#000;transform:translate(0.02px,0.2px) scaleX(0.985);-webkit-text-stroke:0.25px #000;">9.1</span>
<span class="t" style="left:1315px;top:683px;font-size:9.7px;line-height:11px;color:#f2f4f7;font-weight:700;transform:translate(0.3px,0.2px) scaleX(0.8143);">R</span>
<div class="b" style="left:1356px;top:701px;width:1.3px;height:13.4px;background:#15171c;"></div>
<span class="t" style="left:1332px;top:702px;font-size:9.5px;line-height:11px;color:#000;transform:translate(0.61px,0.2px) scaleX(0.985);-webkit-text-stroke:0.25px #000;">0.108</span>
<span class="t" style="left:1363px;top:683px;font-size:9.7px;line-height:11px;color:#f2f4f7;font-weight:700;transform:translate(0.5px,0.2px) scaleX(0.9611);">Realized (USD)</span>
<div class="b" style="left:1452px;top:701px;width:1.3px;height:13.4px;background:#15171c;"></div>
<span class="t" style="left:1436px;top:702px;font-size:9.5px;line-height:11px;color:#000;transform:translate(0.17px,0.2px) scaleX(0.985);-webkit-text-stroke:0.25px #000;">726</span>
<div class="b" style="left:1453.3px;top:677px;width:50.3px;height:24px;overflow:hidden"><span class="t" style="left:5px;top:6px;font-size:9.7px;line-height:11px;color:#f2f4f7;font-weight:700;transform:translate(0.7px,0.2px) scaleX(0.9604);">Live (UTC)</span></div>
<div class="b" style="left:1453.3px;top:701px;width:50.0px;height:13.4px;overflow:hidden"><span class="t" style="left:1px;top:1px;font-size:9.5px;line-height:11px;color:#000;transform:translate(0.45px,0.2px) scaleX(0.999);-webkit-text-stroke:0.25px #000;letter-spacing:0.082px;">2026-04-12</span></div>
<div class="b" style="left:16.6px;top:758.8px;width:1487.0px;height:12.2px;background:#f0f0f0;"></div>
<div class="b" style="left:1328.6px;top:758.8px;width:165.4px;height:12.2px;background:#e1e3e3;"></div>
<svg style="left:19.3px;top:762.3px" width="3.4" height="5.4" viewBox="0 0 4 6"><path d="M3.7 0.2v5.6L0.3 3z" fill="#111"/></svg>
<svg style="left:1497.3px;top:762.3px" width="3.4" height="5.4" viewBox="0 0 4 6"><path d="M0.3 0.2v5.6L3.7 3z" fill="#111"/></svg>
</body></html>
